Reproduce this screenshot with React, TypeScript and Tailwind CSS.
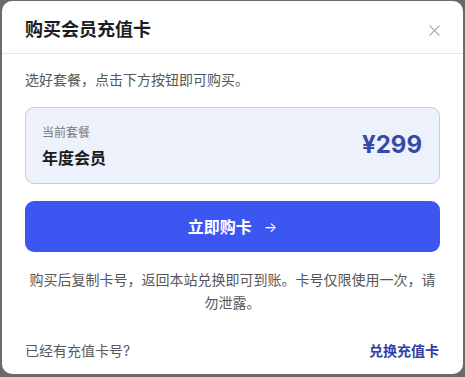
import React from "react";

export default function App() {
  return (
    <div
      className="w-[465px] h-[377px] bg-[#6b6b6b] pt-[1px] pb-[3px] pl-[2px] pr-[2px]"
      style={{ fontFamily: 'Inter, "Noto Sans CJK SC", sans-serif' }}
    >
      <div className="h-full bg-white rounded-[10px] flex flex-col">
        <div className="h-[53px] pt-[6px] px-[23px] flex items-center justify-between border-b border-[#e6e6e8]">
          <div className="text-[18px] leading-[24px] font-bold text-[#1d1d1f]">购买会员充值卡</div>
          <svg width="11" height="11" viewBox="0 0 12 12" className="mr-[0px]">
            <path d="M1 1L11 11M11 1L1 11" stroke="#a3a3a3" strokeWidth="1.2" strokeLinecap="round" />
          </svg>
        </div>
        <div className="px-[23px] flex flex-col flex-1">
          <div className="mt-[16px] text-[14px] leading-[20px] text-[#575757]">选好套餐，点击下方按钮即可购买。</div>
          <div className="mt-[17px] h-[77px] rounded-[9px] border border-[#c6cce2] bg-[#edf1fb] pl-[16px] pr-[17px] flex items-center justify-between">
            <div className="flex flex-col mt-[1px]">
              <div className="text-[12px] leading-[18px] text-[#7a7a7a]">当前套餐</div>
              <div className="mt-[5px] text-[16px] leading-[22px] font-bold text-[#1a1a1a]">年度会员</div>
            </div>
            <div className="text-[24px] leading-[30px] font-bold text-[#3748ad] mt-[-1px]">¥299</div>
          </div>
          <div className="mt-[17px] h-[51px] rounded-[9px] bg-[#3c56f1] flex items-center justify-center text-white">
            <span className="text-[16px] leading-[22px] font-bold">立即购卡</span>
            <span className="ml-[12px] text-[14px] leading-[22px]">→</span>
          </div>
          <div className="mt-[16px] text-[14px] leading-[23px] text-[#575757] text-center">
            购买后复制卡号，返回本站兑换即可到账。卡号仅限使用一次，请勿泄露。
          </div>
          <div className="mt-auto mb-[13px] flex items-center justify-between text-[14px] leading-[20px]">
            <span className="text-[#595959]">已经有充值卡号?</span>
            <span className="font-bold text-[#2f3fa6] mr-[1px]">兑换充值卡</span>
          </div>
        </div>
      </div>
    </div>
  );
}
